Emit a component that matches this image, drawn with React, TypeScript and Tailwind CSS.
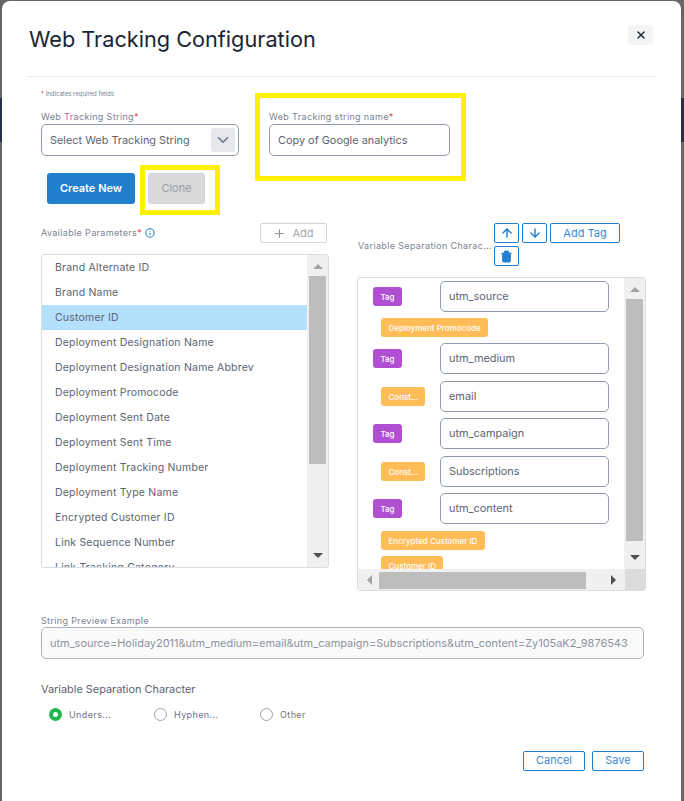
import { ArrowDown, ArrowUp, ChevronDown, Info, Plus, Trash, X } from "lucide-react";

const params = [
  "Brand Alternate ID",
  "Brand Name",
  "Customer ID",
  "Deployment Designation Name",
  "Deployment Designation Name Abbrev",
  "Deployment Promocode",
  "Deployment Sent Date",
  "Deployment Sent Time",
  "Deployment Tracking Number",
  "Deployment Type Name",
  "Encrypted Customer ID",
  "Link Sequence Number",
  "Link Tracking Category",
];

function Arrow({ dir }: { dir: "up" | "down" | "left" | "right" }) {
  const points = {
    up: "5,0 10,5 0,5",
    down: "0,0 10,0 5,5",
    left: "5,0 5,10 0,5",
    right: "0,0 5,5 0,10",
  }[dir];
  const horizontal = dir === "left" || dir === "right";
  return (
    <svg width={horizontal ? 5 : 10} height={horizontal ? 10 : 5} viewBox={horizontal ? "0 0 5 10" : "0 0 10 5"}>
      <polygon points={points} fill={dir === "up" || dir === "left" ? "#a3a3a3" : "#505050"} />
    </svg>
  );
}

function TagBadge() {
  return (
    <span className="flex h-[19px] w-[29px] items-center justify-center rounded-[3px] bg-[#b04fd1] text-[8px] font-medium text-white">
      Tag
    </span>
  );
}

function OrangeBadge({ label, className }: { label: string; className?: string }) {
  return (
    <span className={`flex h-[19px] shrink-0 items-center rounded-[3px] bg-[#ffbc57] px-[7.5px] text-[8px] font-medium whitespace-nowrap text-white ${className ?? ""}`}>
      {label}
    </span>
  );
}

function ValueInput({ value }: { value: string }) {
  return (
    <div className="flex h-[31px] w-[169px] items-center rounded-[5px] border border-[#8f9cab] pl-2 text-[10.9px] text-[#5b6472]">
      {value}
    </div>
  );
}

function Row({ tag, value, mt }: { tag: boolean; value: string; mt: string }) {
  return (
    <div className={`flex items-center ${mt}`}>
      {tag ? (
        <div className="w-[82px] pl-[15px]">
          <TagBadge />
        </div>
      ) : (
        <div className="w-[82px] pl-[23px]">
          <OrangeBadge label="Const..." className="w-[44px]" />
        </div>
      )}
      <ValueInput value={value} />
    </div>
  );
}

function Radio({ label, checked, width }: { label: string; checked?: boolean; width: string }) {
  return (
    <div className={`flex items-center gap-[7px] ${width}`}>
      {checked ? (
        <span className="h-[13px] w-[13px] rounded-full border-[4px] border-[#1fb84f] bg-white" />
      ) : (
        <span className="h-[13px] w-[13px] rounded-full border border-[#98a2b0] bg-white" />
      )}
      <span className="text-[9px] tracking-[0.4px] text-[#6b7485]">{label}</span>
    </div>
  );
}

export default function App() {
  return (
    <div className="relative h-[801px] w-[684px] overflow-hidden bg-[#666] pt-px pl-[2px]" style={{ fontFamily: "Inter, sans-serif" }}>
      {/* page showing through behind the overlay */}
      <div className="absolute top-[98px] left-0 h-[44px] w-full bg-[#27324a]" />

      <div className="relative h-[810px] w-[679px] rounded-lg bg-white">
        {/* Header */}
        <div className="mr-[25px] ml-[26px] flex h-[76px] items-start justify-between border-b border-[#e5e7eb] pr-[3px]">
          <h1 className="mt-[22px] ml-px text-[21.7px] leading-[32px] text-[#1a2433]">Web Tracking Configuration</h1>
          <button className="mt-[24px] flex h-[20px] w-[25px] items-center justify-center rounded-[3px] bg-[#f3f4f6] text-[#1f2937]">
            <X size={12} strokeWidth={3} />
          </button>
        </div>

        <div className="pr-[37px] pl-[39px]">
          <p className="mt-[13px] text-[6px] leading-[8px] text-[#7a8391]">
            <span className="text-[#e0384c]">*</span> Indicates required fields
          </p>

          {/* Top fields */}
          <div className="mt-[13px] flex gap-[30px]">
            <div>
              <label className="block text-[9px] leading-[12px] tracking-[0.35px] text-[#7a8391]">
                Web Tracking String<span className="text-[#e0384c]">*</span>
              </label>
              <div className="mt-px flex h-[32px] w-[198px] items-center justify-between rounded-[5px] border border-[#8f9cab] pr-[3px] pl-2 text-[10.9px] text-[#5b6472]">
                Select Web Tracking String
                <span className="flex h-[24px] w-[24px] items-center justify-center rounded-[3px] bg-[#e5e7eb] text-[#64748b]">
                  <ChevronDown size={18} strokeWidth={2} />
                </span>
              </div>
            </div>
            <div>
              <label className="block text-[9px] leading-[12px] tracking-[0.35px] text-[#7a8391]">
                Web Tracking string name<span className="text-[#e0384c]">*</span>
              </label>
              <div className="mt-px flex h-[32px] w-[181px] items-center rounded-[5px] border border-[#8f9cab] pl-2 text-[10.9px] text-[#5b6472]">
                Copy of Google analytics
              </div>
            </div>
          </div>

          {/* Create / clone */}
          <div className="mt-[17px] ml-[6px] flex gap-[13px]">
            <button className="h-[31px] w-[88px] rounded-[3px] bg-[#2080cf] text-[11px] font-semibold text-white">Create New</button>
            <button className="h-[31px] w-[57px] rounded-[3px] border border-[#d1d3d6] bg-[#d9dadc] text-[11px] text-[#9a9ca0]">Clone</button>
          </div>

          {/* Two columns */}
          <div className="mt-[19px] -mr-[2px] flex items-start gap-[28px]">
            <div className="w-[288px] shrink-0">
              <div className="flex h-[20px] items-center justify-between pr-[2px]">
                <div className="flex items-center gap-[3px] text-[9px] tracking-[0.35px] text-[#7a8391]">
                  <span>
                    Available Parameters<span className="text-[#e0384c]">*</span>
                  </span>
                  <Info size={10} className="text-[#2080cf]" strokeWidth={2.5} />
                </div>
                <button className="flex h-[20px] w-[67px] items-center justify-center gap-[6px] rounded-[2px] border border-[#d1d5db] text-[11px] text-[#a3a7ad]">
                  <Plus size={13} strokeWidth={2} className="text-[#8f9399]" /> Add
                </button>
              </div>
              <div className="mt-[11px] flex h-[314px] overflow-hidden rounded-[3px] border border-[#d9dce1]">
                <div className="flex flex-1 flex-col">
                  {params.map((p) => (
                    <div
                      key={p}
                      className={`flex h-[25px] shrink-0 items-center pl-[13px] text-[10.5px] tracking-[0.2px] text-[#5b6472] ${p === "Customer ID" ? "bg-[#b3e1fd]" : ""}`}
                    >
                      {p}
                    </div>
                  ))}
                </div>
                <div className="flex w-[21px] flex-col items-center bg-[#f0f0f0] px-[2px] py-[9px]">
                  <Arrow dir="up" />
                  <div className="mt-[7px] h-[188px] w-full bg-[#bdbdbd]" />
                  <div className="flex-1" />
                  <Arrow dir="down" />
                </div>
              </div>
            </div>

            <div className="w-[289px] shrink-0">
              <div className="flex h-[43px] items-start">
                <span className="mt-[17px] w-[137px] shrink-0 pl-px text-[9px] leading-[12px] tracking-[0.35px] whitespace-nowrap text-[#7a8391]">
                  Variable Separation Charac...
                </span>
                <div className="flex w-[130px] flex-wrap gap-x-[3px] gap-y-[3px]">
                  <button className="flex h-[20px] w-[25px] items-center justify-center rounded-[2px] border border-[#2080cf] text-[#2080cf]">
                    <ArrowUp size={14} strokeWidth={2.5} />
                  </button>
                  <button className="flex h-[20px] w-[25px] items-center justify-center rounded-[2px] border border-[#2080cf] text-[#2080cf]">
                    <ArrowDown size={14} strokeWidth={2.5} />
                  </button>
                  <button className="h-[20px] w-[70px] rounded-[2px] border border-[#2080cf] text-[11px] text-[#3a8bd6]">Add Tag</button>
                  <button className="flex h-[20px] w-[25px] items-center justify-center rounded-[2px] border border-[#2080cf] text-[#2080cf]">
                    <Trash size={13} fill="#2080cf" strokeWidth={2} />
                  </button>
                </div>
              </div>

              <div className="mt-[11px] h-[314px] w-[289px] overflow-hidden rounded-[3px] border border-[#d9dce1]">
                <div className="flex h-[291px]">
                  <div className="flex-1 overflow-hidden pt-[3px]">
                    <Row tag value="utm_source" mt="" />
                    <OrangeBadge label="Deployment Promocode" className="mt-[6px] ml-[23px] w-fit" />
                    <Row tag value="utm_medium" mt="mt-[6px]" />
                    <Row tag={false} value="email" mt="mt-[7px]" />
                    <Row tag value="utm_campaign" mt="mt-[6px]" />
                    <Row tag={false} value="Subscriptions" mt="mt-[7px]" />
                    <Row tag value="utm_content" mt="mt-[6px]" />
                    <OrangeBadge label="Encrypted Customer ID" className="mt-[7px] ml-[23px] w-fit" />
                    <OrangeBadge label="Customer ID" className="mt-[6px] ml-[23px] w-fit" />
                  </div>
                  <div className="flex w-[21px] flex-col items-center bg-[#f0f0f0] px-[2px] py-[9px]">
                    <Arrow dir="up" />
                    <div className="mt-[7px] h-[242px] w-full bg-[#bdbdbd]" />
                    <div className="flex-1" />
                    <Arrow dir="down" />
                  </div>
                </div>
                <div className="flex h-[22px] items-center bg-[#f0f0f0]">
                  <div className="flex w-[267px] items-center py-[2px] pl-[9px]">
                    <Arrow dir="left" />
                    <div className="ml-[7px] h-[17px] w-[207px] bg-[#bdbdbd]" />
                    <div className="flex-1" />
                    <span className="mr-[9px] flex">
                      <Arrow dir="right" />
                    </span>
                  </div>
                  <div className="h-full flex-1 bg-[#dcdcdc]" />
                </div>
              </div>
            </div>
          </div>

          {/* Preview */}
          <label className="mt-[24px] block text-[9px] leading-[12px] tracking-[0.35px] text-[#7a8391]">String Preview Example</label>
          <div className="flex h-[32px] w-[603px] items-center rounded-[5px] border border-[#a9b3bf] bg-[#fafafb] pl-2 text-[10.95px] whitespace-nowrap text-[#8c93a0]">
            utm_source=Holiday2011&amp;utm_medium=email&amp;utm_campaign=Subscriptions&amp;utm_content=Zy105aK2_9876543
          </div>

          <p className="mt-[23px] text-[10.9px] leading-[14px] text-[#5b6472]">Variable Separation Character</p>
          <div className="mt-[12px] ml-[8px] flex">
            <Radio label="Unders..." checked width="w-[105px]" />
            <Radio label="Hyphen..." width="w-[106px]" />
            <Radio label="Other" width="w-[80px]" />
          </div>

          {/* Footer */}
          <div className="mt-[29px] flex justify-end gap-[7px]">
            <button className="h-[20px] w-[62px] rounded-[2px] border border-[#2080cf] text-[11px] text-[#3a8bd6]">Cancel</button>
            <button className="h-[20px] w-[52px] rounded-[2px] border border-[#2080cf] text-[11px] text-[#3a8bd6]">Save</button>
          </div>
        </div>

        {/* Yellow review highlights */}
        <div className="absolute top-[92px] left-[253px] h-[88px] w-[211px] border-[5px] border-[#fff200]" />
        <div className="absolute top-[164px] left-[138px] h-[50px] w-[80px] border-[5px] border-[#fff200]" />
      </div>
    </div>
  );
}
